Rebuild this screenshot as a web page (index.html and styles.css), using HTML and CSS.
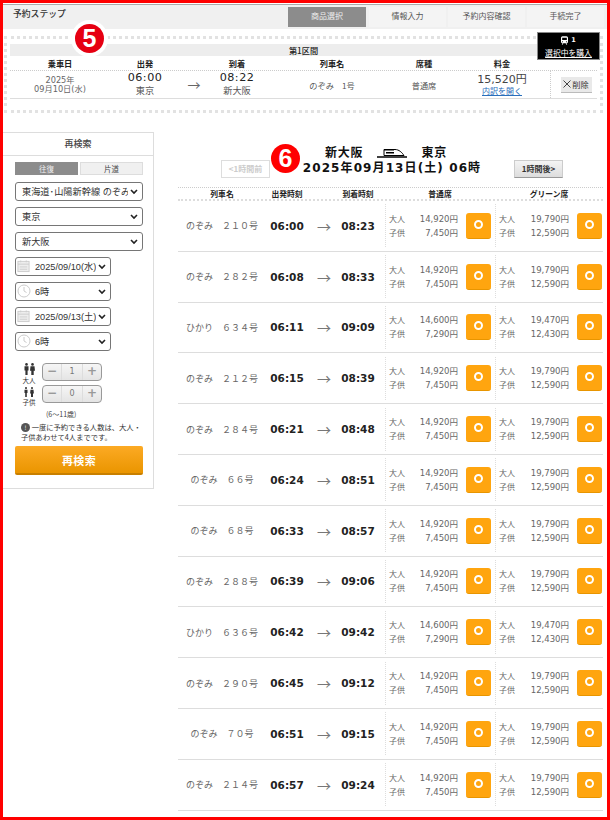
FILE: index.html
```html
<!DOCTYPE html>
<html lang="ja">
<head>
<meta charset="utf-8">
<title>予約ステップ</title>
<link rel="stylesheet" href="styles.css">
</head>
<body>
<div class="frame">
  <header class="steps">
    <div class="steps-title">予約ステップ</div>
    <nav class="step-tabs">
      <div class="step step-on">商品選択</div>
      <div class="step">情報入力</div>
      <div class="step">予約内容確認</div>
      <div class="step">手続完了</div>
    </nav>
  </header>

  <section class="selection">
    <div class="section-bar">第1区間</div>
    <div class="sel-grid sel-head">
      <div>乗車日</div><div>出発</div><div></div><div>到着</div><div>列車名</div><div>席種</div><div class="sel-fare-h">料金</div><div class="sel-del-h"></div>
    </div>
    <div class="sel-grid sel-row">
      <div class="sel-date">2025年<br>09月10日(水)</div>
      <div class="sel-time"><b>06:00</b><span>東京</span></div>
      <div class="sel-arrow">→</div>
      <div class="sel-time"><b>08:22</b><span>新大阪</span></div>
      <div class="sel-text">のぞみ　1号</div>
      <div class="sel-text">普通席</div>
      <div class="sel-fare"><b>15,520円</b><a href="#">内訳を開く</a></div>
      <div class="sel-del"><button class="del-btn" type="button"><svg width="8" height="8" viewBox="0 0 8 8"><path d="M.5.500l7 7M7.500.500l-7 7" stroke="#444" fill="none"/></svg>削除</button></div>
    </div>
  </section>

  <div class="cart">
    <div class="cart-top">
      <svg width="7" height="9" viewBox="0 0 9 11"><path fill="#fff" d="M2 0h5a2 2 0 0 1 2 2v5a2 2 0 0 1-2 2l1 2H7L6 9H3l-1 2H1l1-2a2 2 0 0 1-2-2V2a2 2 0 0 1 2-2zm-.5 2v3h6V2zM2 6.500a.7.7 0 1 0 0 1.400.7.7 0 0 0 0-1.400zm5 0a.7.7 0 1 0 0 1.400.7.7 0 0 0 0-1.400z"/></svg>
      <b>1</b>
    </div>
    <a href="#">選択中を購入</a>
  </div>
  <div class="badge badge-5">5</div>
  <div class="badge badge-6">6</div>

  <div class="content">
    <aside class="search">
      <h2 class="search-title">再検索</h2>
      <div class="search-body">
        <div class="trip-tabs">
          <div class="trip trip-on">往復</div>
          <div class="trip">片道</div>
        </div>
        <select class="sel"><option>東海道･山陽新幹線 のぞみ</option></select>
        <select class="sel"><option>東京</option></select>
        <select class="sel"><option>新大阪</option></select>
        <div class="sel-icon">
          <svg class="ico" width="13" height="14" viewBox="0 0 14 14"><rect x="1" y="2" width="12" height="11" fill="#eee" stroke="#ccc"/><path d="M1 5h12M4 1v2M10 1v2M3 8h8M3 10.500h8" stroke="#ccc" fill="none"/></svg>
          <select class="sel sel-short"><option>2025/09/10(水)</option></select>
        </div>
        <div class="sel-icon">
          <svg class="ico" width="14" height="14" viewBox="0 0 14 14"><circle cx="7" cy="7" r="6" fill="#fff" stroke="#ccc"/><path d="M7 3v4l2.500 1.500" stroke="#ccc" fill="none"/></svg>
          <select class="sel sel-short"><option>6時</option></select>
        </div>
        <div class="sel-icon">
          <svg class="ico" width="13" height="14" viewBox="0 0 14 14"><rect x="1" y="2" width="12" height="11" fill="#eee" stroke="#ccc"/><path d="M1 5h12M4 1v2M10 1v2M3 8h8M3 10.500h8" stroke="#ccc" fill="none"/></svg>
          <select class="sel sel-short"><option>2025/09/13(土)</option></select>
        </div>
        <div class="sel-icon">
          <svg class="ico" width="14" height="14" viewBox="0 0 14 14"><circle cx="7" cy="7" r="6" fill="#fff" stroke="#ccc"/><path d="M7 3v4l2.500 1.500" stroke="#ccc" fill="none"/></svg>
          <select class="sel sel-short"><option>6時</option></select>
        </div>

        <div class="pax pax-adult">
          <div class="pax-label">
            <svg width="11" height="12" viewBox="0 0 11 11" preserveAspectRatio="none"><g fill="#333"><circle cx="2.500" cy="1.300" r="1.300"/><circle cx="8.500" cy="1.300" r="1.300"/><path d="M.5 3h4v3.800h-.9V11H1.400V6.800H.5zM6.500 3h4l.5 4H9.700v4H7.300V7H6z"/></g></svg>
            <span>大人</span>
          </div>
          <div class="stepper"><span class="st-btn">−</span><span class="st-num">1</span><span class="st-btn">+</span></div>
        </div>
        <div class="pax pax-child">
          <div class="pax-label">
            <svg width="10" height="10" viewBox="0 0 10 9" preserveAspectRatio="none"><g fill="#333"><circle cx="2" cy="1" r="1"/><circle cx="8" cy="1" r="1"/><path d="M.5 2.500h3v3h-.7V9H1.200V5.500H.5zM6.500 2.500h3l.4 3.300h-.9V9H7V5.800H6.100z"/></g></svg>
            <span>子供</span>
          </div>
          <div class="stepper"><span class="st-btn">−</span><span class="st-num">0</span><span class="st-btn">+</span></div>
        </div>
        <div class="pax-age">(6〜11歳)</div>
        <p class="notice"><span class="notice-ico">!</span> 一度に予約できる人数は、大人・<br>子供あわせて4人までです。</p>
        <button class="search-btn" type="button">再検索</button>
      </div>
    </aside>

    <main class="results">
      <div class="route">
        <div class="hour-btn hour-prev">&lt;1時間前</div>
        <div class="route-mid">
          <div class="route-line">
            <span>新大阪</span>
            <svg class="route-train" width="30" height="11" viewBox="0 0 30 11"><path d="M0 10h30" stroke="#000" stroke-width="1.500"/><path d="M7 8.500V2.500h11c4 0 7 3 9 6z" fill="#fff" stroke="#000"/><path d="M7 2h10v1.500H7zM9 5h8v1.500H9z" fill="#000"/></svg>
            <span>東京</span>
          </div>
          <div class="route-date">2025年09月13日(土) 06時</div>
        </div>
        <div class="hour-btn hour-next">1時間後&gt;</div>
      </div>

      <div class="t-grid t-head">
        <div>列車名</div><div>出発時刻</div><div></div><div>到着時刻</div><div class="t-fare-h">普通席</div><div class="t-fare-h">グリーン席</div>
      </div>
      <div id="rows"></div>
    </main>
  </div>
</div>
<script src="app.js"></script>
</body>
</html>
```

FILE: app.js
```js
var data = [
  ["のぞみ　２１０号","06:00","08:23",0],
  ["のぞみ　２８２号","06:08","08:33",0],
  ["ひかり　６３４号","06:11","09:09",1],
  ["のぞみ　２１２号","06:15","08:39",0],
  ["のぞみ　２８４号","06:21","08:48",0],
  ["のぞみ　６６号","06:24","08:51",0],
  ["のぞみ　６８号","06:33","08:57",0],
  ["のぞみ　２８８号","06:39","09:06",0],
  ["ひかり　６３６号","06:42","09:42",1],
  ["のぞみ　２９０号","06:45","09:12",0],
  ["のぞみ　７０号","06:51","09:15",0],
  ["のぞみ　２１４号","06:57","09:24",0]
];
var fares = [
  [["14,920円","7,450円"],["19,790円","12,590円"]],
  [["14,600円","7,290円"],["19,470円","12,430円"]]
];
function fare(f, cls) {
  return '<div class="fare ' + cls + '"><div class="fare-tbl">' +
    '<span>大人</span><span class="yen">' + f[0] + '</span>' +
    '<span>子供</span><span class="yen">' + f[1] + '</span>' +
    '</div><button class="pick" type="button"><i></i></button></div>';
}
document.getElementById("rows").innerHTML = data.map(function (d) {
  var p = fares[d[3]];
  return '<div class="t-grid t-row"><div class="t-name">' + d[0] + '</div>' +
    '<div class="t-time">' + d[1] + '</div><div class="t-arrow">→</div>' +
    '<div class="t-time">' + d[2] + '</div>' + fare(p[0], "fare-std") + fare(p[1], "fare-green") + '</div>';
}).join("");
```

FILE: styles.css
```css
* { box-sizing: border-box; }
html, body { margin: 0; padding: 0; }
body { width: 610px; height: 820px; overflow: hidden; background: #fff; font-family: "Noto Sans CJK JP", "DejaVu Sans", sans-serif; color: #333; }
.frame { position: relative; width: 610px; height: 820px; border: 3px solid #f00; overflow: hidden; }

.steps { display: flex; justify-content: space-between; height: 25px; margin-top: 1px; padding-right: 3px; background: #f0f0f0; border-top: 1px solid #aaa; }
.steps-title { padding: 2px 0 0 10px; font-size: 8.800px; font-weight: 500; color: #333; line-height: 14px; }
.step-tabs { display: flex; gap: 2px; margin-top: 2px; height: 20px; }
.step { width: 77px; text-align: center; font-size: 8px; line-height: 18px; color: #555; background: #f4f4f4; }
.step-on { width: 78px; background: #8c8c8c; color: #eee; margin-right: 1px; }

.selection { margin: 7px 0 0 1px; width: 599px; height: 77px; border: 3px dotted #e2e2e2; padding: 5px 3px 0 3px; }
.section-bar { height: 12px; background: #ededed; text-align: center; font-size: 8.200px; font-weight: 500; line-height: 12px; color: #222; }
.sel-grid { display: grid; grid-template-columns: 100px 70px 28px 58px 132px 52px 100px 47px; align-items: center; width: 587px; text-align: center; }
.sel-head { height: 15px; border-bottom: 1px dotted #ccc; font-size: 8.200px; font-weight: 700; color: #222; }
.sel-fare-h { padding-left: 4px; }
.sel-row { height: 28px; border-bottom: 1px solid #ddd; color: #555; }
.sel-date { font-family: "DejaVu Sans", "Noto Sans CJK JP", sans-serif; font-size: 8.200px; line-height: 9px; color: #666; }
.sel-time b { display: block; font-family: "DejaVu Sans", sans-serif; font-size: 11.200px; font-weight: 400; line-height: 13px; color: #222; letter-spacing: .5px; }
.sel-time span { display: block; font-size: 9.200px; line-height: 13.500px; color: #555; }
.sel-arrow { font-family: "Noto Sans CJK JP", sans-serif; font-size: 13px; color: #666; }
.sel-text { font-size: 8.200px; color: #555; }
.sel-fare { padding-left: 4px; }
.sel-fare b { display: block; font-family: "DejaVu Sans", "Noto Sans CJK JP", sans-serif; font-size: 11px; font-weight: 400; line-height: 13px; color: #444; }
.sel-fare a { display: block; font-size: 8px; line-height: 10px; color: #2a6ebb; }
.sel-del { height: 100%; display: flex; align-items: center; justify-content: center; padding-left: 4px; border-left: 1px dotted #ccc; }
.del-btn { display: flex; align-items: center; justify-content: center; gap: 1px; width: 31px; height: 16px; padding: 0; border: 0; border-bottom: 1px solid #bbb; background: #e9e9e9; font-family: inherit; font-size: 8.200px; line-height: 15px; color: #333; }

.cart { position: absolute; left: 534px; top: 29px; width: 63px; height: 28px; background: #000; border: 1px solid #888; color: #fff; text-align: center; font-size: 7.800px; line-height: 11px; }
.cart-top { display: flex; align-items: center; justify-content: center; gap: 3px; height: 14px; }
.cart-top svg { display: block; }
.cart-top b { font-family: "DejaVu Sans", sans-serif; font-size: 6.500px; }
.cart a { display: block; color: #fff; }

.badge { position: absolute; width: 29px; height: 29px; border-radius: 50%; background: #e60012; color: #fff; box-shadow: 0 0 0 4px #fff; text-align: center; font-family: "Liberation Sans", sans-serif; font-size: 25px; font-weight: 700; line-height: 29px; }
.badge-5 { left: 72px; top: 21px; }
.badge-6 { left: 268px; top: 141px; background: #f00; box-shadow: none; }

.content { display: flex; margin-top: 19px; align-items: flex-start; }
.search { flex: none; width: 151px; height: 357px; margin-right: 24px; border: 1px solid #ddd; border-left: 0; }
.search-title { height: 23px; margin: 0; border-bottom: 1px solid #ddd; text-align: center; font-size: 9px; font-weight: 500; line-height: 21px; color: #444; }
.search-body { padding: 6px 11px 0 12px; display: flex; flex-direction: column; align-items: flex-start; }
.trip-tabs { display: flex; gap: 2px; width: 128px; margin-bottom: 7px; }
.trip { flex: 1; height: 13px; border: 1px solid #ddd; background: #f0f0f0; text-align: center; font-size: 7.500px; line-height: 11px; color: #444; }
.trip-on { background: #8c8c8c; border-color: #8c8c8c; color: #eee; }
.sel { display: block; appearance: none; -webkit-appearance: none; width: 128px; height: 19px; margin: 0 0 6px; padding: 0 14px 0 6px; border: 1px solid #767676; border-radius: 3px; background: #fff url("data:image/svg+xml,%3Csvg xmlns='http://www.w3.org/2000/svg' width='8' height='6' viewBox='0 0 8 6'%3E%3Cpath d='M1 1l3 3 3-3' fill='none' stroke='%23222' stroke-width='1.600'/%3E%3C/svg%3E") no-repeat right 4px center; font-family: "Liberation Sans", "Noto Sans CJK JP", sans-serif; font-size: 9.200px; color: #333; }
.sel-icon { position: relative; }
.sel-short { width: 96px; padding-left: 19px; }
.ico { position: absolute; left: 2px; top: 2px; }
.pax { display: flex; align-items: flex-start; height: 22px; }
.pax-adult { margin-top: 6px; }
.pax-label { width: 27px; display: flex; flex-direction: column; align-items: center; font-size: 6.500px; line-height: 8px; color: #333; padding-left: 1px; }
.pax-label svg { display: block; margin-bottom: 1px; }
.pax-child .pax-label svg { margin: 2px 0 1px; }
.stepper { display: flex; width: 60px; height: 18px; border: 1px solid #999; border-radius: 4px; background: linear-gradient(#f6f6f6, #e4e4e4); }
.st-btn { flex: 1; font-family: "DejaVu Sans", sans-serif; font-size: 12px; font-weight: 700; line-height: 15px; text-align: center; color: #999; }
.st-num { width: 22px; font-family: "DejaVu Sans", sans-serif; font-size: 8px; line-height: 16px; text-align: center; color: #777; border-left: 1px solid #ddd; border-right: 1px solid #ddd; }
.pax-age { width: 100%; padding-left: 31px; margin-top: 1px; font-size: 7px; line-height: 12px; color: #444; }
.notice { width: 128px; margin: 3px 0 0; padding-left: 6px; font-size: 7.300px; line-height: 9.500px; color: #333; white-space: nowrap; }
.notice-ico { display: inline-block; width: 9px; height: 9px; border-radius: 50%; background: #555; color: #fff; font-size: 6px; line-height: 9px; text-align: center; }
.search-btn { width: 128px; height: 29px; margin-top: 4px; padding: 0; border: 0; border-bottom: 2px solid #c87f00; border-radius: 2px; background: linear-gradient(#fcaa24, #ea9500); color: #fff; font-family: inherit; font-size: 11px; font-weight: 700; letter-spacing: .3px; }

.results { width: 425px; flex: none; }
.route { display: flex; justify-content: space-between; align-items: flex-start; height: 55px; padding: 12px 40px 0 43px; }
.hour-btn { width: 49px; height: 18px; margin-top: 16px; text-align: center; font-size: 8px; font-weight: 700; line-height: 16px; }
.hour-prev { border: 1px solid #ddd; color: #ccc; background: #fff; }
.hour-next { border: 1px solid #ccc; border-bottom-color: #999; color: #333; background: linear-gradient(#f4f4f4, #ddd); }
.route-mid { text-align: center; color: #111; font-weight: 700; }
.route-line { display: flex; justify-content: center; align-items: center; padding-right: 12px; font-size: 12px; line-height: 16px; letter-spacing: .8px; }
.route-train { margin: 0 14px 0 14px; }
.route-date { font-family: "DejaVu Sans", "Noto Sans CJK JP", sans-serif; font-size: 12px; line-height: 16px; letter-spacing: 1.100px; }

.t-grid { display: grid; grid-template-columns: 88px 42px 32px 36px 9px 110px 108px; align-items: center; text-align: center; }
.t-head { height: 14px; border-top: 1px dotted #ccc; border-bottom: 2px dotted #ddd; font-size: 7.800px; font-weight: 700; color: #222; }
.t-head .t-fare-h:nth-child(5) { grid-column: 6; }
.t-row { height: 50.800px; border-bottom: 1px solid #ddd; }
.t-name { font-size: 9px; color: #666; }
.t-time { font-family: "DejaVu Sans", sans-serif; font-size: 10.500px; font-weight: 700; color: #222; white-space: nowrap; }
.t-arrow { font-family: "Noto Sans CJK JP", sans-serif; font-size: 14px; color: #777; }
.fare { display: flex; align-items: center; height: 43px; border-left: 1px dotted #ddd; padding-left: 3px; }
.fare-std { grid-column: 6; }
.fare-tbl { display: grid; grid-template-columns: 16px 53px; row-gap: 2px; font-size: 8px; line-height: 12px; color: #666; text-align: left; }
.fare-green .fare-tbl { grid-template-columns: 16px 54px; }
.yen { font-family: "DejaVu Sans", "Noto Sans CJK JP", sans-serif; font-size: 8.500px; text-align: right; }
.pick { display: flex; align-items: center; justify-content: center; width: 25px; height: 26px; margin-left: 8px; padding: 0 0 2px; border: 0; border-radius: 3px; background: #ffa50f; border-bottom: 1px solid #e89500; }
.pick i { display: block; width: 9px; height: 9px; border: 2px solid #fff; border-radius: 50%; }
```
